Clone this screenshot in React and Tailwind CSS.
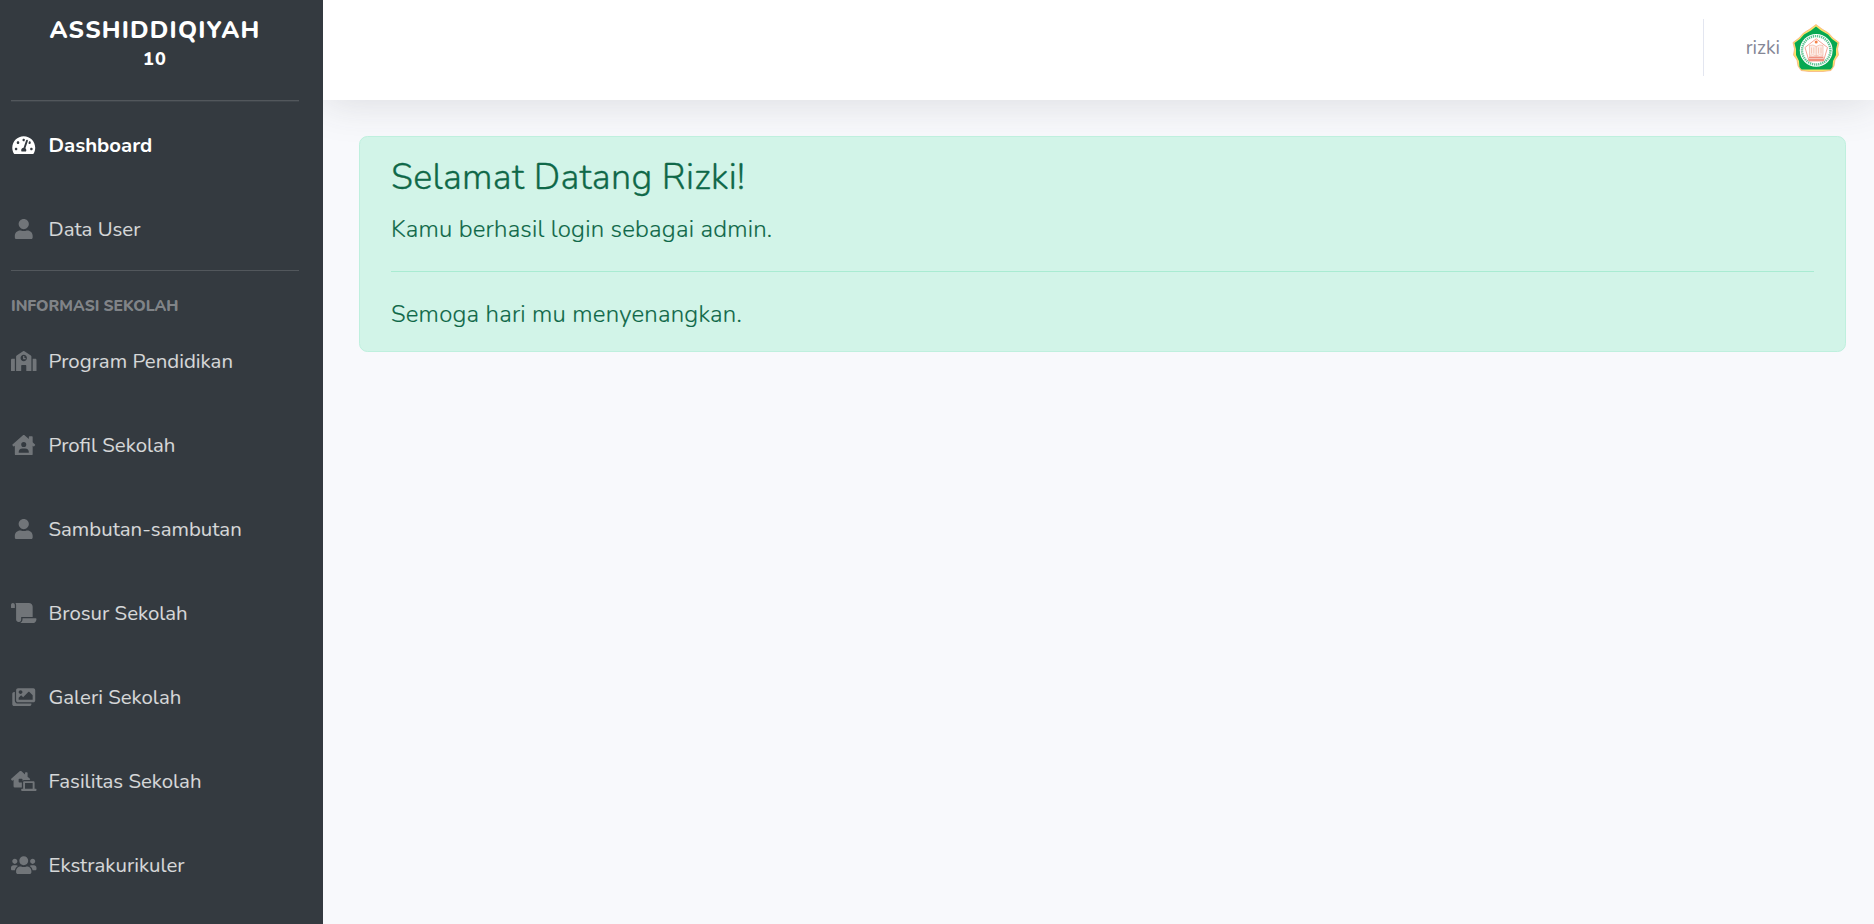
import React from 'react';
import {
  FaTachometerAlt,
  FaUser,
  FaSchool,
  FaHouseUser,
  FaScroll,
  FaImages,
  FaLaptopHouse,
  FaUsers,
} from 'react-icons/fa';

const schoolLinks = [
  { label: 'Program Pendidikan', icon: FaSchool },
  { label: 'Profil Sekolah', icon: FaHouseUser },
  { label: 'Sambutan-sambutan', icon: FaUser },
  { label: 'Brosur Sekolah', icon: FaScroll },
  { label: 'Galeri Sekolah', icon: FaImages },
  { label: 'Fasilitas Sekolah', icon: FaLaptopHouse },
  { label: 'Ekstrakurikuler', icon: FaUsers },
];

function NavItem({ label, icon: Icon, active }) {
  return (
    <a
      className={
        active
          ? 'flex h-[84px] shrink-0 items-center gap-3 text-[20.4px] font-bold text-white'
          : 'flex h-[84px] shrink-0 items-center gap-3 text-[20.4px] text-white/80'
      }
    >
      <Icon
        className={
          active
            ? 'h-[20.4px] w-[25.5px] shrink-0 text-white'
            : 'h-[20.4px] w-[25.5px] shrink-0 text-white/30'
        }
      />
      <span className="whitespace-nowrap">{label}</span>
    </a>
  );
}

function SchoolLogo() {
  return (
    <svg viewBox="0 0 48 48" className="size-12">
      <path
        d="M24 .5 30 5 36.500 9 41 14 47 18.500 45.500 25 46.500 31 43 36 42 42 39 46.500 31 47.500H17L9 46.500 6 42 5 36 1.500 31 2.500 25 1 18.500 7 14 11.500 9 18 5Z"
        fill="#fbe36a"
        stroke="#f6ab7c"
        strokeWidth=".7"
        strokeLinejoin="round"
      />
      <path
        d="M24 2.500 29 6.500 36 10.500 40 15 45.500 19 44 25 44 31 41 37 40.500 43 38.500 45.500H9.500L7.500 43 7 37 4 31 4 25 2.500 19 8 15 12 10.500 19 6.500Z"
        fill="#07a852"
      />
      <circle cx="24.200" cy="26.300" r="16.400" fill="#fff" />
      <circle
        cx="24.200"
        cy="26.300"
        r="14.200"
        fill="none"
        stroke="#5cc391"
        strokeWidth="2.400"
        strokeDasharray="1.300 .8"
      />
      <path
        d="M24.200 14.800 35.500 23.500 31.500 37H17L13 23.500Z"
        fill="#fff"
        stroke="#f4a596"
        strokeWidth="1"
      />
      <path
        d="M17.500 21.500Q21 20 24.200 22.500 27.500 20 31 21.500V31.500Q27.500 30 24.200 32 21 30 17.500 31.500ZM24.200 22.500V32M19.500 23.500V29.500M21.800 23.500V29.500M26.500 23.500V29.500M29 23.500V29.500"
        fill="#fdeee9"
        stroke="#f2a990"
        strokeWidth=".6"
      />
      <path d="M17 32.500H31.500V34H17ZM16.500 34.500H32V37H16.500Z" fill="#f0907e" />
      <circle cx="24.200" cy="18" r="1.500" fill="#f58248" />
    </svg>
  );
}

export default function App() {
  return (
    <div className="flex h-[924px] w-full overflow-hidden bg-[#f8f9fc] font-['Nunito','Open_Sans',sans-serif] text-2xl leading-normal">
      <aside className="relative z-10 flex w-[323px] shrink-0 flex-col overflow-hidden bg-[#343a40] pr-6 pl-[11px]">
        <div className="flex h-[100px] shrink-0 flex-col items-center pt-3 font-extrabold tracking-[1.2px] text-white">
          <span className="text-2xl leading-9">ASSHIDDIQIYAH</span>
          <span className="text-lg leading-[22px]">10</span>
        </div>
        <hr className="h-[2px] shrink-0 border-0 border-b border-white/5 bg-white/15 bg-clip-padding" />
        <nav className="flex flex-col pt-px">
          <NavItem label="Dashboard" icon={FaTachometerAlt} active />
          <NavItem label="Data User" icon={FaUser} />
        </nav>
        <hr className="-mt-px h-px shrink-0 border-0 bg-white/15" />
        <h2 className="mt-6 text-[15.6px] leading-[23px] font-extrabold text-white/40">
          INFORMASI SEKOLAH
        </h2>
        <nav className="flex flex-col pt-px">
          {schoolLinks.map((link) => (
            <NavItem key={link.label} {...link} />
          ))}
        </nav>
      </aside>

      <div className="flex min-w-0 flex-1 flex-col">
        <header className="flex h-[100px] shrink-0 items-start justify-end bg-white pr-[34px] shadow-[0_3.6px_42px_0_rgba(58,59,69,0.15)]">
          <div className="mt-[19px] h-[57px] w-px bg-[#e3e6f0]" />
          <div className="mt-6 ml-[42px] flex items-center gap-3">
            <span className="text-[19.2px] text-[#858796]">rizki</span>
            <SchoolLogo />
          </div>
        </header>
        <main className="pt-9 pr-7 pl-9">
          <section className="rounded-[8.4px] border border-[#bff0de] bg-[#d2f4e8] px-[31px] py-[19px] font-light text-[#0f6848]">
            <h1 className="mb-3 text-4xl leading-[43px] tracking-[0.3px] [-webkit-text-stroke:0.3px]">
              Selamat Datang Rizki!
            </h1>
            <p className="leading-9 tracking-[0.2px] [-webkit-text-stroke:0.15px]">
              Kamu berhasil login sebagai admin.
            </p>
            <hr className="my-6 border-t border-[#a9ebd2]" />
            <p className="leading-9 tracking-[0.2px] [-webkit-text-stroke:0.15px]">
              Semoga hari mu menyenangkan.
            </p>
          </section>
        </main>
      </div>
    </div>
  );
}
